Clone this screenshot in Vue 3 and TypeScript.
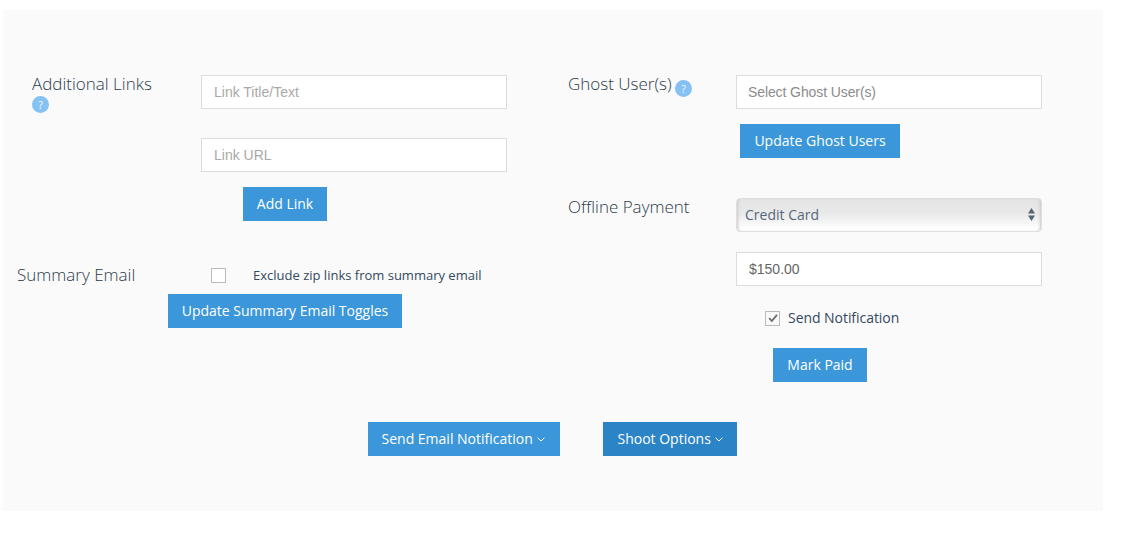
<script setup lang="ts">
const payment = 'Credit Card'
const amount = '$150.00'
</script>

<template>
  <main class="panel">
    <div class="cols">
      <section class="col left">
        <div class="row links">
          <div class="label wrap">Additional Links <span class="help">?</span></div>
          <div class="fields">
            <input class="field" type="text" placeholder="Link Title/Text" />
            <input class="field second" type="text" placeholder="Link URL" />
          </div>
        </div>
        <div class="center add"><button class="btn">Add Link</button></div>
        <div class="row summary">
          <div class="label summary-label">Summary Email</div>
          <span class="box"></span>
          <span class="check-text">Exclude zip links from summary email</span>
        </div>
        <div class="center toggles"><button class="btn">Update Summary Email Toggles</button></div>
      </section>

      <section class="col right">
        <div class="row">
          <div class="label rlabel">Ghost User(s) <span class="help">?</span></div>
          <input class="field ghost-field" type="text" placeholder="Select Ghost User(s)" />
        </div>
        <div class="center ghost"><button class="btn">Update Ghost Users</button></div>
        <div class="row payment">
          <div class="label rlabel">Offline Payment</div>
          <div class="fields">
            <div class="select-wrap">
              <select class="select">
                <option>{{ payment }}</option>
              </select>
              <svg class="arrows" width="7" height="13" viewBox="0 0 7 13">
                <path d="M3.5 0 7 5.5H0Z M0 7.5H7L3.5 13Z" fill="#5a6570" />
              </svg>
            </div>
            <input class="field amount" type="text" :value="amount" />
          </div>
        </div>
        <div class="notify">
          <span class="box checked">
            <svg width="12" height="12" viewBox="0 0 12 12">
              <path d="M2.2 6.2 4.8 9 10 2.8" fill="none" stroke="#6b6b6b" stroke-width="1.8" />
            </svg>
          </span>
          <span class="check-text notify-text">Send Notification</span>
        </div>
        <div class="center paid"><button class="btn">Mark Paid</button></div>
      </section>
    </div>

    <div class="actions">
      <button class="btn send">
        Send Email Notification
        <svg class="chev" width="8" height="5" viewBox="0 0 8 5"><path d="M.6.8 4 4 7.4.8" fill="none" stroke="#fff" /></svg>
      </button>
      <button class="btn dark">
        Shoot Options
        <svg class="chev" width="8" height="5" viewBox="0 0 8 5"><path d="M.6.8 4 4 7.4.8" fill="none" stroke="#fff" /></svg>
      </button>
    </div>
  </main>
</template>

<style scoped>
.panel {
  box-sizing: border-box;
  width: 1100px;
  height: 501px;
  margin: 10px 0 0 3px;
  padding-top: 65px;
  background: #fafafa;
  font-family: "Open Sans", sans-serif;
  color: #34495e;
}
.cols { display: flex; height: 347px; }
.col { flex: none; }
.left { width: 564px; }
.right { width: 504px; margin-left: 1px; }
.row { display: flex; align-items: flex-start; }
.links { padding-left: 29px; }
.label {
  flex: none;
  font-size: 17px;
  font-weight: 300;
  line-height: 20px;
  color: #2c3a4a;
}
.wrap { width: 169px; margin-top: -1px; }
.wrap .help { display: block; margin-top: 2px; }
.rlabel { width: 168px; margin-top: -1px; }
.rlabel .help { margin-left: -1px; position: relative; top: 1px; }
.help {
  display: inline-block;
  width: 17px;
  height: 17px;
  border-radius: 50%;
  background: #85c1f2;
  color: #f2f8fd;
  font-size: 11px;
  font-weight: 400;
  line-height: 17px;
  text-align: center;
  vertical-align: -2px;
}
.fields { display: flex; flex-direction: column; width: 306px; }
.field {
  box-sizing: border-box;
  display: block;
  width: 306px;
  height: 34px;
  padding: 0 12px;
  border: 1px solid #dcdcdc;
  border-radius: 0;
  background: #fff;
  color: #666;
  font: 14px "Liberation Sans", Arial, sans-serif;
  outline: none;
}
.field::placeholder { color: #a9a9a9; opacity: 1; }
.ghost-field { padding-left: 11px; letter-spacing: -0.1px; }
.ghost-field::placeholder { color: #8c8c8c; }
.second { margin-top: 29px; }
.center { display: flex; justify-content: center; }
.add { margin-top: 15px; }
.btn {
  display: inline-block;
  height: 34px;
  padding: 0 14px;
  border: 0;
  border-radius: 0;
  background: #3b97d9;
  color: #fff;
  font: 400 14px/34px "Open Sans", sans-serif;
  white-space: nowrap;
}
.dark { background: #2b84c6; }
.send { padding-right: 15px; }
.summary { margin-top: 47px; align-items: center; height: 14px; padding-left: 14px; }
.summary-label { width: 194px; margin-top: 0; }
.box {
  box-sizing: border-box;
  flex: none;
  display: flex;
  align-items: center;
  justify-content: center;
  width: 15px;
  height: 15px;
  border: 1px solid #bbb;
  background: #fff;
}
.checked { background: #f9f9f9; }
.check-text { font-size: 13px; line-height: 18px; margin-left: 27px; white-space: nowrap; }
.toggles { margin-top: 12px; }
.ghost { margin-top: 15px; }
.payment { margin-top: 40px; }
.select-wrap { position: relative; width: 306px; height: 34px; }
.select {
  box-sizing: border-box;
  display: block;
  width: 100%;
  height: 34px;
  padding: 0 8px 2px;
  appearance: none;
  border: 1px solid #dedede;
  border-radius: 4px;
  background: linear-gradient(#e4e4e4 0%, #e9e9e9 45%, #fbfbfb 85%, #fff 100%);
  box-shadow: inset 3px 0 3px -2px #c9c9c9, inset -3px 0 3px -2px #c9c9c9;
  color: #56677a;
  font: 14px "Open Sans", sans-serif;
  outline: none;
}
.arrows { position: absolute; right: 7px; top: 10px; pointer-events: none; }
.amount { margin-top: 20px; }
.notify { display: flex; align-items: center; margin: 25px 0 0 197px; height: 14px; }
.notify-text { margin-left: 8px; font-size: 14px; letter-spacing: -0.05px; }
.paid { margin-top: 23px; }
.actions { display: flex; justify-content: center; gap: 43px; padding-right: 1px; }
.chev { margin-left: 1px; vertical-align: 2px; }
</style>
